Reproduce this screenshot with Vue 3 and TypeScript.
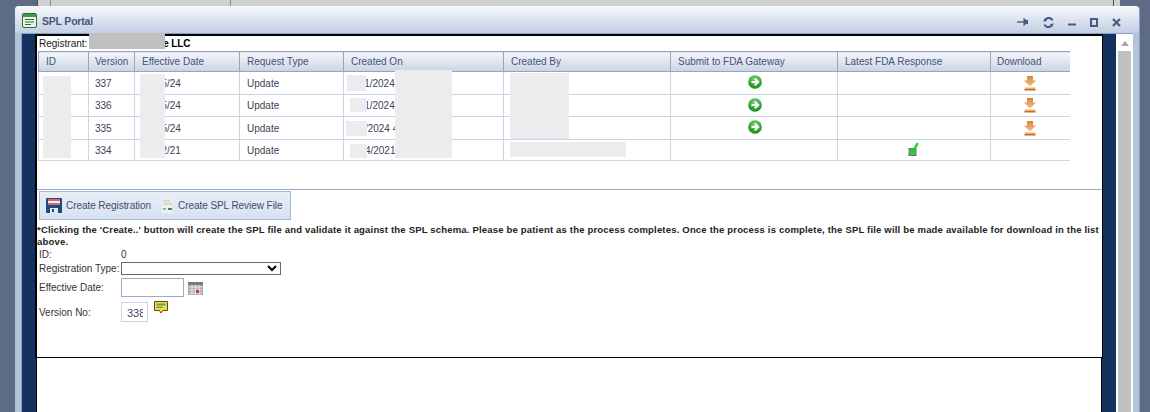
<script setup lang="ts">
interface Row { v: number; d: string; c: string; submit: boolean; ok: boolean; dl: boolean }
const rows: Row[] = [
  { v: 337, d: '01/15/24', c: '1/11/2024 4:15 PM', submit: true, ok: false, dl: true },
  { v: 336, d: '01/15/24', c: '1/11/2024 4:10 PM', submit: true, ok: false, dl: true },
  { v: 335, d: '01/15/24', c: '1/1/2024 4:05 PM', submit: true, ok: false, dl: true },
  { v: 334, d: '01/12/21', c: '1/14/2021 3:20 PM', submit: false, ok: true, dl: false },
]
const cols = ['ID', 'Version', 'Effective Date', 'Request Type', 'Created On', 'Created By', 'Submit to FDA Gateway', 'Latest FDA Response', 'Download']
const patches = [
  { cls: 'p1', s: 'left:43px;top:76px;width:28px;height:82px' },
  { cls: 'p1', s: 'left:140px;top:74px;width:25px;height:84px' },
  { cls: 'p1', s: 'left:347px;top:75px;width:19px;height:16px' },
  { cls: 'p1', s: 'left:350px;top:98px;width:17px;height:14px' },
  { cls: 'p1', s: 'left:346px;top:121px;width:21px;height:15px' },
  { cls: 'p1', s: 'left:350px;top:144px;width:17px;height:14px' },
  { cls: 'p1', s: 'left:395px;top:70px;width:57px;height:88px' },
  { cls: 'p1', s: 'left:510px;top:73px;width:59px;height:66px' },
  { cls: 'p1', s: 'left:510px;top:142px;width:116px;height:15px' },
  { cls: 'p2', s: 'left:89px;top:33px;width:76px;height:16px' },
]
</script>

<template>
  <div class="page">
    <div class="backdrop"><div class="backbox"></div></div>
    <section class="window">
      <header class="titlebar">
        <svg class="appicon" width="15" height="15" viewBox="0 0 15 15">
          <rect x="0.5" y="0.5" width="14" height="14" rx="1.5" fill="#eef6ea" stroke="#2f6b3a" />
          <rect x="1" y="1" width="13" height="3" fill="#3f9a4d" />
          <path d="M3 6.500h9M3 9h9M3 11.500h6" stroke="#2f6b3a" stroke-width="1" />
        </svg>
        <span class="title">SPL Portal</span>
        <div class="controls">
          <svg width="12" height="10" viewBox="0 0 12 10"><path d="M0 5h7" stroke="#4b5a85" stroke-width="1.400" /><path d="M6.500 1v8h1.200V7.500L11 7V3L7.700 2.500V1z" fill="#4b5a85" /></svg>
          <svg width="11" height="11" viewBox="0 0 11 11"><path d="M9.500 3.500A4 4 0 0 0 2 3.500M1.500 7.500A4 4 0 0 0 9 7.500" stroke="#4b5a85" stroke-width="2" fill="none" /><path d="M0 4.500l4-.5-2-3zM11 6.500l-4 .5 2 3z" fill="#4b5a85" /></svg>
          <svg width="8" height="10" viewBox="0 0 8 10"><path d="M0 7.500h8" stroke="#4b5a85" stroke-width="2" /></svg>
          <svg width="8" height="9" viewBox="0 0 8 9"><rect x="1" y="1" width="6" height="7" fill="none" stroke="#4b5a85" stroke-width="2" /></svg>
          <svg width="9" height="9" viewBox="0 0 9 9"><path d="M1 1l7 7M8 1l-7 7" stroke="#4b5a85" stroke-width="2.200" /></svg>
        </div>
      </header>
      <div class="client">
        <div class="navy">
          <div class="frame">
            <div class="gridbox">
              <div class="registrant">Registrant: <b class="company">e LLC</b></div>
              <table class="grid">
                <colgroup>
                  <col style="width:50px" /><col style="width:46px" /><col style="width:105px" /><col style="width:104px" />
                  <col style="width:160px" /><col style="width:167px" /><col style="width:167px" /><col style="width:153px" /><col style="width:79px" />
                </colgroup>
                <thead>
                  <tr><th v-for="c in cols" :key="c">{{ c }}</th></tr>
                </thead>
                <tbody>
                  <tr v-for="r in rows" :key="r.v">
                    <td></td>
                    <td>{{ r.v }}</td>
                    <td class="clip">{{ r.d }}</td>
                    <td>Update</td>
                    <td class="clip">{{ r.c }}</td>
                    <td></td>
                    <td class="center">
                      <svg v-if="r.submit" class="ic go" width="14" height="14" viewBox="0 0 14 14">
                        <defs>
                          <radialGradient id="gb" cx="50%" cy="30%" r="70%"><stop offset="0" stop-color="#7ed67a" /><stop offset="1" stop-color="#0f8a16" /></radialGradient>
                        </defs>
                        <circle cx="7" cy="7" r="6.800" fill="url(#gb)" />
                        <path d="M3.500 7h5.500M6.800 3.800L10.200 7l-3.400 3.200" stroke="#fff" stroke-width="2" fill="none" />
                      </svg>
                    </td>
                    <td class="center">
                      <svg v-if="r.ok" class="ic ok" width="12" height="14" viewBox="0 0 12 14">
                        <rect x="1" y="6.500" width="7" height="7" fill="#8f8f8f" stroke="#6f6f6f" />
                        <rect x="2" y="7.500" width="5" height="3.500" fill="#1be52f" />
                        <path d="M2 7.500l2.300 3L9.800 1" stroke="#0bdc22" stroke-width="2.400" fill="none" />
                      </svg>
                    </td>
                    <td class="center">
                      <svg v-if="r.dl" class="ic dl" width="12" height="15" viewBox="0 0 12 15">
                        <defs>
                          <linearGradient id="ob" x1="0" y1="0" x2="0" y2="1"><stop offset="0" stop-color="#d9822f" /><stop offset="1" stop-color="#f3c295" /></linearGradient>
                        </defs>
                        <path d="M3 0h6v4.500h3L6 10.500 0 4.500h3z" fill="url(#ob)" />
                        <rect x="0.500" y="11.500" width="11" height="1.500" fill="#eeb07a" />
                        <rect x="0.500" y="13" width="11" height="1.500" fill="#c56d1e" />
                      </svg>
                    </td>
                  </tr>
                </tbody>
              </table>
            </div>
            <div class="toolbar">
              <span class="tool">
                <svg width="16" height="15" viewBox="0 0 16 15">
                  <rect width="16" height="15" rx="1" fill="#1d4a80" />
                  <rect x="2" y="1" width="12" height="6" fill="#e2626a" />
                  <rect x="2" y="3" width="12" height="2" fill="#f1f1f1" />
                  <rect x="4" y="10" width="8" height="5" fill="#dfe7f2" />
                  <rect x="6" y="11" width="2" height="3" fill="#1d4a80" />
                </svg>
                Create Registration
              </span>
              <span class="tool">
                <svg width="13" height="15" viewBox="0 0 13 15">
                  <rect x="1" y="0" width="10" height="15" fill="#eef0ee" />
                  <path d="M2 3h7M2 6h9" stroke="#b9c2b9" />
                  <rect x="2" y="10" width="3" height="2" fill="#9fb4a0" />
                  <rect x="7" y="10" width="4" height="2" fill="#3f8a55" />
                </svg>
                Create SPL Review File
              </span>
            </div>
            <p class="notice">*Clicking the 'Create..' button will create the SPL file and validate it against the SPL schema. Please be patient as the process completes. Once the process is complete, the SPL file will be made available for download in the list above.</p>
            <div class="form">
              <label>ID:</label><span>0</span>
              <label>Registration Type:</label>
              <select class="select"><option></option></select>
              <label class="datelabel">Effective Date:</label>
              <div class="datecell">
                <input class="dateinput" type="text" />
                <svg class="cal" width="15" height="13" viewBox="0 0 15 13">
                  <rect width="15" height="13" fill="#a9a9a9" />
                  <rect x="0" y="0" width="15" height="3" fill="#7b7b7b" />
                  <path d="M1 5h13M1 8h13M1 11h13M4 3v10M7.500 3v10M11 3v10" stroke="#e9e9e9" />
                  <rect x="8" y="8" width="3" height="3" fill="#d8383a" />
                </svg>
              </div>
              <label>Version No:</label>
              <div class="vercell">
                <input class="verinput" type="text" value="338" />
                <svg class="note" width="14" height="13" viewBox="0 0 14 13">
                  <path d="M.5.500h13v9H9L7 12 5.500 9.500H.5z" fill="#f1d94b" stroke="#5c4a1e" />
                  <rect x="2.500" y="2.500" width="9" height="2" fill="#58a85a" />
                  <rect x="2.500" y="5.500" width="6" height="1.500" fill="#8a9a3f" />
                </svg>
              </div>
            </div>
          </div>
          <div class="lower"></div>
        </div>
        <aside class="scroll">
          <svg width="8" height="5" viewBox="0 0 8 5"><path d="M0 5l4-5 4 5z" fill="#a8a8a8" /></svg>
          <div class="track"></div>
        </aside>
      </div>
    </section>
    <div v-for="(p, i) in patches" :key="i" class="patch" :class="p.cls" :style="p.s"></div>
  </div>
</template>

<style>
html, body { margin: 0; padding: 0; }
</style>

<style scoped>
.page {
  position: relative;
  width: 1150px;
  height: 412px;
  overflow: hidden;
  background: #5d6b85;
  font-family: "Liberation Sans", Arial, sans-serif;
  font-size: 10px;
  color: #3c4356;
}
.backdrop {
  position: absolute;
  left: 37px;
  top: 0;
  width: 1075px;
  height: 7px;
  background: #d1d1d1;
  border: 1px solid #4c4c4c;
  border-width: 0 1px;
  box-shadow: 6px 0 0 #d1d1d1;
}
.backbox { position: absolute; left: 12px; top: -2px; width: 179px; height: 7px; border: 1px solid #8c8c8c; }
.window {
  position: absolute;
  left: 15px;
  top: 6px;
  width: 1125px;
  height: 420px;
  background: #b3c3dc;
  border-radius: 4px 4px 0 0;
  border-right: 1px solid #8ea0bf;
  box-sizing: border-box;
  display: flex;
  flex-direction: column;
}
.titlebar {
  height: 27px;
  box-sizing: border-box;
  flex: none;
  display: flex;
  align-items: center;
  padding: 2px 18px 0 7px;
  background: linear-gradient(#f6f8fb, #c2cfe3);
  border-radius: 4px 4px 0 0;
}
.appicon { margin-right: 5px; }
.title { font-size: 10.500px; font-weight: bold; color: #44567c; letter-spacing: -.2px; }
.controls { margin: 3px 0 0 auto; display: flex; align-items: center; gap: 14px; }
.client { flex: 1; display: flex; margin: 0 6px; background: #fff; border-left: 1px solid #8ea0bf; border-top: 1px solid #8ea0bf; }
.navy {
  width: 1094px;
  background: #14325f;
  padding: 0 13px;
  box-sizing: border-box;
  display: flex;
  flex-direction: column;
  flex: none;
}
.frame {
  width: 1068px;
  height: 324px;
  flex: none;
  box-sizing: border-box;
  background: #fff;
  border: 2px solid #000;
  border-right-width: 1px;
  border-bottom-width: 1px;
}
.lower { flex: 1; background: #fff; border-left: 1px solid #000; border-right: 1px solid #000; margin-left: 1px; width: 1066px; box-sizing: border-box; }
.gridbox { border-bottom: 1px solid #9aa8c0; height: 153px; }
.registrant { height: 15px; line-height: 15px; padding-left: 2px; color: #222; font-size: 10px; white-space: nowrap; }
.company { color: #000; margin-left: 73px; letter-spacing: -.1px; }
.grid {
  border-collapse: collapse;
  table-layout: fixed;
  width: 1031px;
  margin-left: 1px;
}
.grid th {
  height: 19px;
  padding: 0 0 0 7px;
  text-align: left;
  font-weight: normal;
  font-size: 10px;
  color: #46527a;
  background: linear-gradient(#f5f7fa, #c9d4e4);
  border: 1px solid #94a5c3;
}
.grid th:nth-child(2), .grid td:nth-child(2), .grid th:last-child { padding-left: 6px; }
.grid td {
  height: 22px;
  padding: 0 0 0 7px;
  border: 1px solid #cbd5e6;
  font-size: 10px;
  box-sizing: border-box;
}
.grid tbody tr:nth-child(odd) td { height: 23px; }
.grid tbody tr:last-child td { height: 21px; }
.grid td:last-child, .grid th:last-child { border-right: none; }
.clip { white-space: nowrap; overflow: hidden; }
.grid td.center { text-align: center; padding: 0; }
.ic { display: block; margin: 0 auto; position: relative; }
.go { left: 1px; top: -1px; }
.ok { top: -1px; }
.toolbar {
  margin: 1px 0 0 2px;
  width: 252px;
  height: 29px;
  box-sizing: border-box;
  border: 1px solid #a3b6d6;
  background: linear-gradient(#e9eef6, #d7e1ef);
  display: flex;
  align-items: center;
  gap: 10px;
  padding-left: 6px;
}
.tool { display: inline-flex; align-items: center; gap: 4px; font-size: 10px; color: #3f4c6b; white-space: nowrap; letter-spacing: -.06px; }
.notice {
  margin: 4px 0 0 0;
  font-size: 9.500px;
  font-weight: bold;
  line-height: 12px;
  color: #222;
  letter-spacing: .185px;
  width: 1065px;
}
.form {
  margin: -1px 0 0 2px;
  display: grid;
  grid-template-columns: 82px auto;
  grid-template-rows: 14px 14px 24px 26px;
  justify-content: start;
  align-items: center;
  font-size: 10px;
  color: #333;
}
.form label { white-space: nowrap; }
.datelabel { padding-top: 1px; }
.select { width: 160px; height: 13px; margin: 1px 0 0; padding: 0; border: 1px solid #666; background: #fff; box-sizing: border-box; display: block; }
.datecell { display: flex; align-items: center; gap: 4px; height: 24px; }
.cal { margin-top: 2px; }
.dateinput { width: 63px; height: 19px; box-sizing: border-box; border: 1px solid #9aaac8; background: #fff; padding: 0; margin: 0; }
.vercell { display: flex; align-items: flex-start; gap: 6px; height: 26px; }
.verinput { width: 27px; height: 20px; margin: 3px 0 0; box-sizing: border-box; border: 1px solid #c8d4e8; padding: 2px 4px 0 5px; font: 11px "Liberation Sans", sans-serif; color: #3f4c6b; background: #fff; }
.note { margin-top: 2px; }
.scroll {
  flex: 1;
  background: #fff;
  display: flex;
  flex-direction: column;
  align-items: center;
  padding: 7px 2px 0;
}
.track { width: 13px; flex: 1; margin-top: 5px; background: #c1c1c1; }
.patch { position: absolute; }
.p1 { background: #ececef; }
.p2 { background: #c0c0c0; }
</style>
